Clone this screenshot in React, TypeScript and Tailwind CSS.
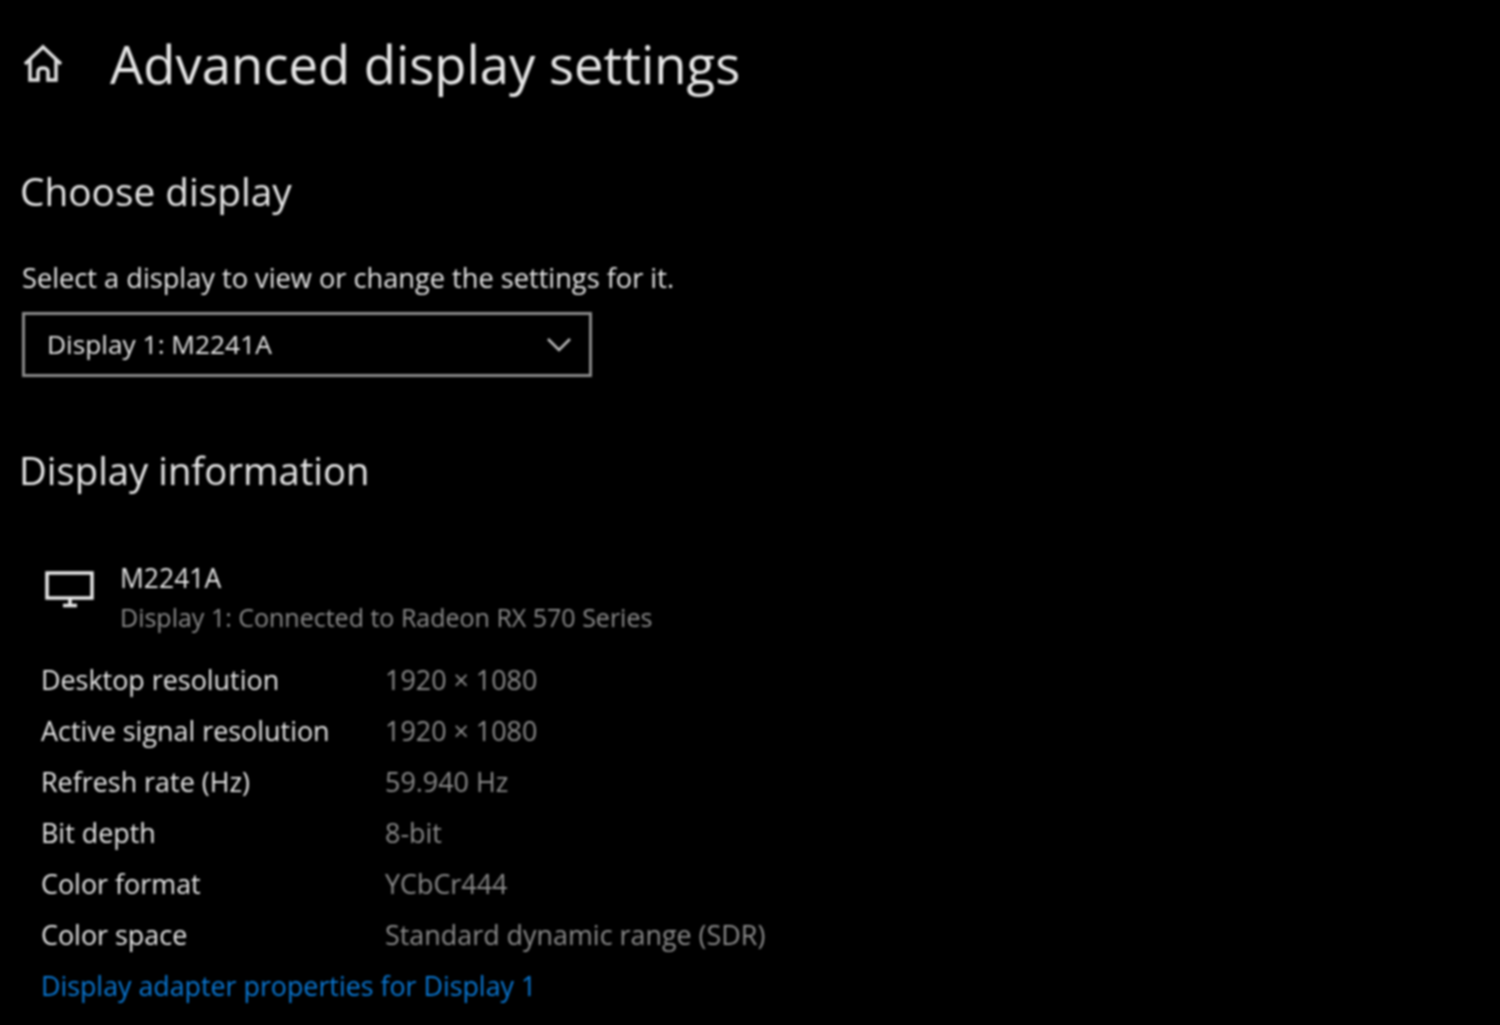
const rows = [
  ["Desktop resolution", "1920 × 1080"],
  ["Active signal resolution", "1920 × 1080"],
  ["Refresh rate (Hz)", "59.940 Hz"],
  ["Bit depth", "8-bit"],
  ["Color format", "YCbCr444"],
  ["Color space", "Standard dynamic range (SDR)"],
];

export default function App() {
  return (
    <div className="h-[1025px] w-[1500px] overflow-hidden bg-black">
      <div className="h-full bg-black font-['Open_Sans','Noto_Sans',sans-serif] text-[#e6e6e6] blur-[0.9px]">
        <div className="flex items-center pl-[23px] pt-[31px]">
          <svg width="40" height="40" viewBox="0 0 40 40" fill="none" stroke="#e0e0e0" strokeWidth="3.5" className="shrink-0">
            <path d="M2 20 L20 3 L38 20" />
            <path d="M7 16 V36 H15 V28 Q15 24 20 24 Q25 24 25 28 V36 H33 V16" />
          </svg>
          <h1 className="ml-[47px] text-[52.6px] leading-[66px]">Advanced display settings</h1>
        </div>

        <h2 className="ml-[20px] mt-[69px] text-[38.8px] leading-[50px]">Choose display</h2>
        <p className="ml-[22px] mt-[45px] text-[27.2px] leading-[34px]">Select a display to view or change the settings for it.</p>

        <div className="ml-[22px] mt-[17px] flex h-[65px] w-[570px] items-center justify-between border-[3px] border-[#8a8a8a] pl-[22px] pr-[17px] text-[26.3px]">
          <span>Display 1: M2241A</span>
          <svg width="26" height="16" viewBox="0 0 26 16" fill="none" stroke="#bdbdbd" strokeWidth="2.5">
            <path d="M2 2 L13 13 L24 2" />
          </svg>
        </div>

        <h2 className="ml-[19px] mt-[68px] text-[38.3px] leading-[50px]">Display information</h2>

        <div className="ml-[45px] mt-[66px] flex items-start">
          <svg width="50" height="40" viewBox="0 0 50 40" fill="none" className="mt-[10px] shrink-0">
            <rect x="2" y="2" width="45" height="25" stroke="#e6e6e6" strokeWidth="3.5" />
            <path d="M25 28 V33 M18 34.5 H32" stroke="#e6e6e6" strokeWidth="3.5" />
          </svg>
          <div className="ml-[25px]">
            <div className="text-[26.5px] leading-[34px]">M2241A</div>
            <div className="mt-[5px] text-[25px] leading-[34px] text-[#8c8c8c]">Display 1: Connected to Radeon RX 570 Series</div>
          </div>
        </div>

        <div className="ml-[41px] mt-[21px]">
          {rows.map(([label, value]) => (
            <div key={label} className="flex h-[51px] items-center text-[26.9px]">
              <span className="w-[344px]">{label}</span>
              <span className="text-[#8c8c8c]">{value}</span>
            </div>
          ))}
          <div className="flex h-[51px] items-center text-[26.8px] text-[#0a78d4]">Display adapter properties for Display 1</div>
        </div>
      </div>
    </div>
  );
}
